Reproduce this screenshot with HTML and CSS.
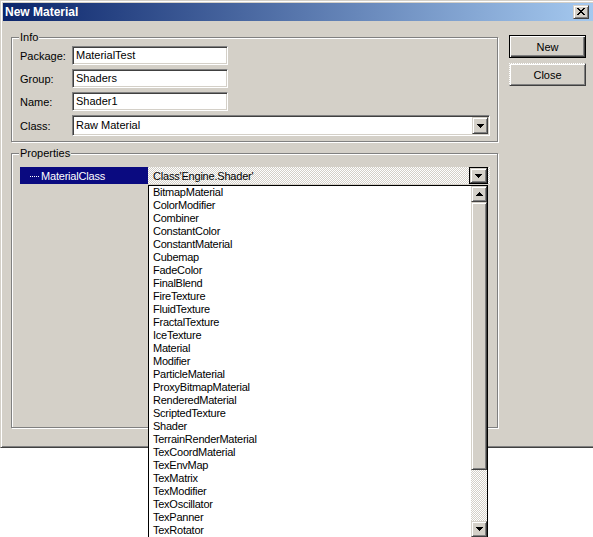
FILE: index.html
```html
<!DOCTYPE html>
<html>
<head>
<meta charset="utf-8">
<link rel="stylesheet" href="styles.css">
</head>
<body>
<div class="window">
  <div class="titlebar">
    <span class="title">New Material</span>
    <span class="tb-btn raised">
      <svg width="8" height="7" viewBox="0 0 8 7" shape-rendering="crispEdges"><path d="M0 0h2v1h1v1h2v-1h1v-1h2v1h-1v1h-1v1h-1v1h1v1h1v1h1v1h-2v-1h-1v-1h-2v1h-1v1h-2v-1h1v-1h1v-1h1v-1h-1v-1h-1z" fill="#000"/></svg>
    </span>
  </div>
  <div class="client">
    <div class="groups">
      <div class="group info">
        <div class="legend">Info</div>
        <div class="form">
          <div class="row"><label>Package:</label><div class="edit">MaterialTest</div></div>
          <div class="row"><label>Group:</label><div class="edit">Shaders</div></div>
          <div class="row"><label>Name:</label><div class="edit">Shader1</div></div>
          <div class="row combo-row"><label>Class:</label>
            <div class="combo">
              <span class="combo-text">Raw Material</span>
              <span class="dd-btn raised"><svg class="arrow" width="7" height="4" viewBox="0 0 7 4" shape-rendering="crispEdges"><path d="M0 0h7v1h-1v1h-1v1h-1v1h-1v-1h-1v-1h-1v-1h-1z"/></svg></span>
            </div>
          </div>
        </div>
      </div>
      <div class="group props">
        <div class="legend">Properties</div>
        <div class="prop-row">
          <div class="prop-name"><span class="dots"></span>MaterialClass</div>
          <div class="prop-value">
            <span class="prop-text">Class'Engine.Shader'</span>
            <span class="prop-btn"><span class="prop-btn-in raised"><svg class="arrow" width="7" height="4" viewBox="0 0 7 4" shape-rendering="crispEdges"><path d="M0 0h7v1h-1v1h-1v1h-1v1h-1v-1h-1v-1h-1v-1h-1z"/></svg></span></span>
          </div>
        </div>
      </div>
    </div>
    <div class="buttons">
      <button class="btn default">New</button>
      <button class="btn raised close">Close</button>
    </div>
  </div>
</div>

<div class="popup">
  <ul class="items">
    <li>BitmapMaterial</li>
    <li>ColorModifier</li>
    <li>Combiner</li>
    <li>ConstantColor</li>
    <li>ConstantMaterial</li>
    <li>Cubemap</li>
    <li>FadeColor</li>
    <li>FinalBlend</li>
    <li>FireTexture</li>
    <li>FluidTexture</li>
    <li>FractalTexture</li>
    <li>IceTexture</li>
    <li>Material</li>
    <li>Modifier</li>
    <li>ParticleMaterial</li>
    <li>ProxyBitmapMaterial</li>
    <li>RenderedMaterial</li>
    <li>ScriptedTexture</li>
    <li>Shader</li>
    <li>TerrainRenderMaterial</li>
    <li>TexCoordMaterial</li>
    <li>TexEnvMap</li>
    <li>TexMatrix</li>
    <li>TexModifier</li>
    <li>TexOscillator</li>
    <li>TexPanner</li>
    <li>TexRotator</li>
  </ul>
  <div class="scrollbar">
    <div class="sb-btn raised"><svg class="arrow" width="7" height="4" viewBox="0 0 7 4" shape-rendering="crispEdges"><path d="M3 0h1v1h1v1h1v1h1v1h-7v-1h1v-1h1v-1h1z"/></svg></div>
    <div class="thumb raised"></div>
    <div class="track"></div>
    <div class="sb-btn raised"><svg class="arrow" width="7" height="4" viewBox="0 0 7 4" shape-rendering="crispEdges"><path d="M0 0h7v1h-1v1h-1v1h-1v1h-1v-1h-1v-1h-1v-1h-1z"/></svg></div>
  </div>
</div>
</body>
</html>
```

FILE: styles.css
```css
* { box-sizing: border-box; }
html, body { margin: 0; padding: 0; background: #fff; overflow: hidden; }
body {
  width: 593px;
  height: 537px;
  position: relative;
  font: 11px "Liberation Sans", Arial, sans-serif;
  color: #000;
}

.raised {
  background: #D4D0C8;
  border: 1px solid;
  border-color: #D4D0C8 #404040 #404040 #D4D0C8;
  box-shadow: inset 1px 1px 0 #fff, inset -1px -1px 0 #808080;
}

.window {
  width: 600px;
  height: 448px;
  background: #D4D0C8;
  border: 1px solid;
  border-color: #D4D0C8 #404040 #404040 #D4D0C8;
  box-shadow: inset 1px 1px 0 #fff, inset -1px -1px 0 #808080;
  padding: 2px;
  display: flex;
  flex-direction: column;
}

.titlebar {
  height: 18px;
  flex: none;
  background: linear-gradient(90deg, #0A246A 0%, #A6CAF0 100%);
  display: flex;
  align-items: center;
  justify-content: space-between;
  padding: 0 8px 0 2px;
}
.title {
  color: #fff;
  font-weight: bold;
  font-size: 12px;
  line-height: 14px;
}
.tb-btn {
  width: 16px;
  height: 14px;
  display: flex;
  align-items: center;
  justify-content: center;
  padding-bottom: 1px;
}

.client {
  flex: 1;
  display: flex;
  padding: 14px 0 0 8px;
}
.groups {
  width: 487px;
  flex: none;
  display: flex;
  flex-direction: column;
  gap: 11px;
  padding-top: 2px;
}
.group {
  border: 1px solid #808080;
  box-shadow: inset 1px 1px 0 #fff, 1px 1px 0 #fff;
  display: flex;
  flex-direction: column;
}
.info { height: 105px; }
.props { height: 275px; }
.legend {
  width: fit-content;
  height: 13px;
  line-height: 13px;
  margin: -7px 0 0 7px;
  padding: 0 1px;
  background: #D4D0C8;
}

.form {
  display: flex;
  flex-direction: column;
  gap: 4px;
  padding: 2px 0 0 8px;
}
.row {
  display: flex;
  align-items: center;
  height: 19px;
}
.combo-row { height: 21px; }
.row label { width: 52px; flex: none; }
.edit {
  width: 156px;
  height: 19px;
  background: #fff;
  border: 1px solid;
  border-color: #808080 #fff #fff #808080;
  box-shadow: inset 1px 1px 0 #404040, inset -1px -1px 0 #D4D0C8;
  padding: 0 2px 0 3px;
  line-height: 17px;
  white-space: nowrap;
}
.combo {
  width: 418px;
  height: 21px;
  background: #fff;
  border: 1px solid;
  border-color: #808080 #fff #fff #808080;
  box-shadow: inset 1px 1px 0 #404040, inset -1px -1px 0 #D4D0C8;
  padding: 1px;
  display: flex;
}
.combo-text {
  flex: 1;
  padding-left: 2px;
  line-height: 17px;
}
.dd-btn {
  width: 16px;
  height: 17px;
  display: flex;
  align-items: center;
  justify-content: center;
}
.arrow { display: block; fill: #000; }

.prop-row {
  display: flex;
  height: 17px;
  width: 470px;
  margin: 7px 0 0 8px;
}
.prop-name {
  width: 128px;
  flex: none;
  background: #0A0A80;
  color: #fff;
  display: flex;
  align-items: center;
  padding-left: 10px;
  letter-spacing: -0.2px;
}
.dots {
  width: 10px;
  height: 1px;
  margin: 1px 1px 0 0;
  background: repeating-linear-gradient(90deg, #fff 0 1px, transparent 1px 2px);
}
.prop-value {
  flex: 1;
  display: flex;
  align-items: center;
  padding: 0 2px 0 5px;
  letter-spacing: -0.2px;
  background: repeating-conic-gradient(#fff 0 25%, #D4D0C8 0 50%) 0 0 / 2px 2px;
}
.prop-text { flex: 1; }
.prop-btn {
  width: 19px;
  height: 17px;
  border: 1px solid #000;
  display: flex;
}
.prop-btn-in {
  flex: 1;
  display: flex;
  align-items: center;
  justify-content: center;
}

.buttons {
  margin-left: 11px;
  display: flex;
  flex-direction: column;
  gap: 5px;
}
.btn {
  width: 77px;
  height: 23px;
  padding: 0;
  font: inherit;
  color: #000;
  text-align: center;
}
.btn.default {
  background: #D4D0C8;
  border: 1px solid #000;
  box-shadow: inset 1px 1px 0 #fff, inset -1px -1px 0 #404040, inset -2px -2px 0 #808080;
}
.btn.close {
  border-top-style: dotted;
  border-left-style: dotted;
  border-top-color: #fff;
  border-left-color: #fff;
}

.popup {
  position: absolute;
  left: 148px;
  top: 185px;
  width: 340px;
  height: 360px;
  background: #fff;
  border: 1px solid #000;
  display: flex;
  align-items: flex-start;
}
.items {
  flex: 1;
  list-style: none;
  margin: 0;
  padding: 0 0 0 4px;
  line-height: 13px;
  letter-spacing: -0.25px;
  white-space: nowrap;
}
.scrollbar {
  width: 16px;
  flex: none;
  display: flex;
  flex-direction: column;
}
.sb-btn {
  height: 16px;
  display: flex;
  align-items: center;
  justify-content: center;
}
.thumb { height: 268px; }
.track {
  height: 51px;
  background: repeating-conic-gradient(#fff 0 25%, #D4D0C8 0 50%) 0 0 / 2px 2px;
}
```
